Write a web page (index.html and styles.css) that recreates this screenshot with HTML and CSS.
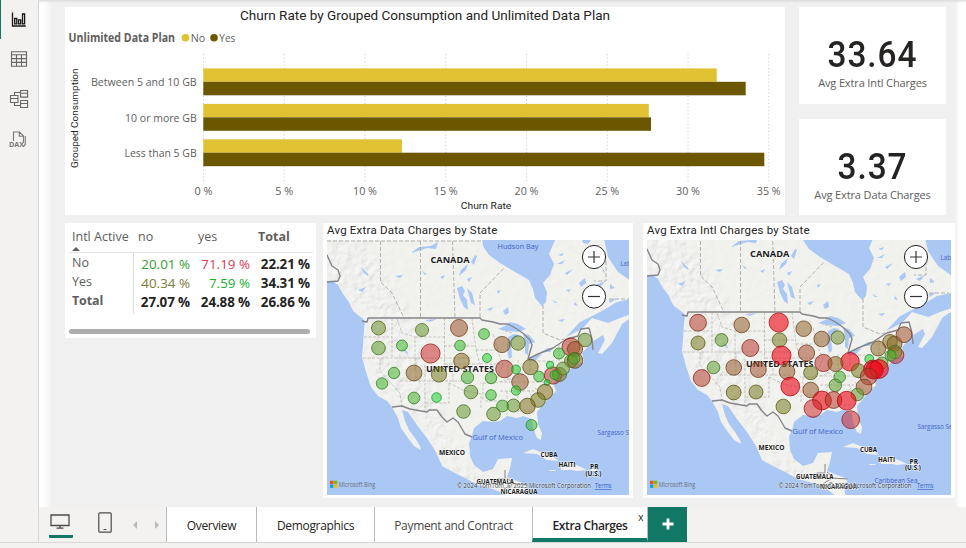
FILE: index.html
```html
<!DOCTYPE html>
<html lang="en">
<head>
<meta charset="utf-8">
<title>Extra Charges</title>
<link rel="stylesheet" href="styles.css">
</head>
<body>
<div class="app">
  <div class="workspace">
    <nav class="rail">
      <div class="rail-item active"><svg width="16" height="16" viewBox="0 0 16 16"><path d="M1.500 .5v13.500H14.800M3.700 6.500h2.100v5.300H3.700zM7.600 7.800h2.100v4H7.600zM11.500 2h2.100v9.800h-2.100z" fill="none" stroke="#161616" stroke-width="1.300"/></svg></div>
      <div class="rail-item"><svg width="18" height="16" viewBox="0 0 18 16"><path d="M1.5.7h15v14.6h-15zM1.5 3.8h15M1.5 7.6h15M1.5 11.4h15M6.5 3.8v11.5M11.5 3.8v11.5" fill="none" stroke="#686664" stroke-width="1.1"/></svg></div>
      <div class="rail-item"><svg width="20" height="20" viewBox="0 0 20 20"><path d="M1.5 6.5h7.5v7H1.5zM1.5 9.5h7.5M11.6 1.5h7v6.6h-7zM11.6 4.2h7M11.6 11.5h7v7h-7zM11.6 14.5h7M5.5 6.500V3.500h6M5.500 13.500v3h6" fill="none" stroke="#686664" stroke-width="1.100"/></svg></div>
      <div class="rail-item"><svg width="20" height="20" viewBox="0 0 20 20"><path d="M5.500 12V3h6l4 4v6.500M11.300 3v4.300h4M17.300 7v8.500l-2 2" fill="none" stroke="#7a7876" stroke-width="1.100"/><text x="1" y="18" class="dax" textLength="15" lengthAdjust="spacingAndGlyphs">DAX</text></svg></div>
    </nav>
    <div class="main">
      <main class="report">
        <div class="row top">
          <section class="card chart">
            <svg id="chart" width="720" height="208" viewBox="65 7 720 208"></svg>
          </section>
          <div class="kpis">
            <section class="card kpi"><div class="value">33.64</div><div class="caption">Avg Extra Intl Charges</div></section>
            <section class="card kpi second"><div class="value">3.37</div><div class="caption">Avg Extra Data Charges</div></section>
          </div>
        </div>
        <div class="row bottom">
          <section class="card matrix">
            <div class="m-head"><span>Intl Active<i class="sort"></i></span><span>no</span><span>yes</span><b>Total</b></div>
            <div class="m-row"><span>No</span><span class="g1">20.01 %</span><span class="r1">71.19 %</span><b>22.21 %</b></div>
            <div class="m-row"><span>Yes</span><span class="o1">40.34 %</span><span class="g2">7.59 %</span><b>34.31 %</b></div>
            <div class="m-row total"><b>Total</b><b>27.07 %</b><b>24.88 %</b><b>26.86 %</b></div>
            <div class="scroll"></div>
          </section>
          <section class="card map">
            <h2>Avg Extra Data Charges by State</h2>
            <svg width="302" height="255" viewBox="327 240 302 255">
              <defs>
                <filter id="relief" x="0" y="0" width="1" height="1">
                  <feTurbulence type="fractalNoise" baseFrequency=".14" numOctaves="4" seed="8"/>
                  <feDiffuseLighting surfaceScale="1.700" lighting-color="#ffffff"><feDistantLight azimuth="225" elevation="58"/></feDiffuseLighting>
                </filter>
                <filter id="soft" x="-.2" y="-.2" width="1.400" height="1.400"><feGaussianBlur stdDeviation="6"/></filter>
                <path id="land" d="M320 230V281L333 281L338 285L343 294L349 302L352 308L360 313L365 322L364 330L363 345L362 357L366 372L371 387L378 396L387 401L392 407L398 418L401 428L408 438L414 446L421 450L420 446L415 438L409 430L405 421L402 410L408 412L417 425L427 438L436 452L442 466L455 473L467 479L478 485L493 489L507 495L518 504H526L524 494L528 485L517 481L507 477L510 468L512 458L498 459L493 469L483 472L474 465L470 456L469 443L472 436L474 428L483 421L492 422L500 421L507 416L517 418L523 416L532 419L533 428L537 438L541 440L542 433L538 424L537 412L547 400L556 391L553 383L559 377L567 373L573 366L584 362L582 353L593 341L603 335L605 340L598 353L602 354L612 343L622 324L629 319L640 316V311L620 318L608 323L592 318L582 329L566 337L580 322L602 311L617 302L635 298V284L618 272L608 257L602 230Z"/>
                <clipPath id="landClip"><use href="#land"/></clipPath>
                <mask id="mountains"><g fill="#fff" filter="url(#soft)"><path d="M327 240H365L410 315L433 380L450 440L495 490L470 490L410 412L370 375V315L327 280Z"/><path opacity=".4" d="M510 410L560 355L600 330L592 350L550 385Z"/></g></mask>
                <g id="base">
                  <rect x="320" y="230" width="320" height="280" fill="#abc7f3"/>
                  <use href="#land" fill="#f2f1ee"/>
                  <g clip-path="url(#landClip)">
                    <rect x="320" y="230" width="320" height="280" filter="url(#relief)" opacity=".07"/>
                    <g mask="url(#mountains)"><rect x="320" y="230" width="320" height="280" filter="url(#relief)" opacity=".33"/></g>
                  </g>
                  <g fill="#f1f0ed"><path d="M523 453L533 449L540 452L549 454L559 461L547 460L537 454ZM561 463L572 463L587 470L577 471L572 470L561 470ZM549 470h6l1 1h-6zM591 469h5v2h-5zM350 305l5 2 11 12-4-1-8-6zM609 331l5-1v1z"/></g>
                  <g fill="#abc7f3">
                    <path d="M481 230L483 246L489 255L500 263L515 272L529 280L533 289L535 298L542 306L546 302L547 292L543 283L550 275L554 264L549 254L556 238V230Z"/>
                    <path d="M498 329L505 326L510 322L518 324L526 329L518 332L507 331ZM508 337L514 334L519 335L511 342L512 357L509 359L507 350ZM523 334L529 335L535 342L529 344L528 355L525 353L525 342ZM527 361L537 355L542 354L535 361ZM541 352L548 348L554 348L550 352Z"/>
                    <path d="M457 288l5-2 3 5-2 4 4 5 1 10-4-3-4-8zM467 288l5 5 3 12-4-2zM461 270l7-6-2 6-7 6zM467 279l5-2-3 5zM411 253l8-6 12-1 7-4-2 7-9-1-9 3zM395 276l8-1-3 3zM422 271l5 3-2 1zM440 277l5-2-2 4zM361 267l8 8-1 1-5-4zM358 290l8-3-4 5z"/>
                    <path d="M582 240l9 0-3 4-5-1zM557 264l8-4-3 4zM565 273l8-4-6 6zM579 283l6-5 1 5-5 4zM596 285l9-4-5 6zM552 300l6 3-3 0zM566 290l5-1-2 3zM600 265l5 7-1 1zM487 309l7-2-4 4zM503 311l5-4 1 6-4 2zM497 291l4-1-3 4zM558 320l7-1-3 3zM471 262l4-7 2 1-3 9zM585 300l6-3-2 5zM610 284l5 4-5 1zM609 300l8-2-7 5zM425 320l12-1-7 3zM402 349l5 2 1 4zM558 255l6-2-2 3zM575 302l3 4-4-1z"/>
                  </g>
                  <g fill="none" stroke="#a3a19d" stroke-width=".8" stroke-dasharray="4 2">
                    <path d="M327 241H482M380.500 241V282L392 293L404 318M420.500 241V318M452.500 241L455 318M480 317V293L505 267M543 305V333L560 340L570 338M606 261V281H594M609 299H629"/>
                  </g>
                  <g fill="none" stroke="#b4b2ae" stroke-width=".7" stroke-dasharray="3 1.500">
                    <path d="M364 337H392M392 318V358M363 358H470M397 319L402 333L415 337V370M415 337H445M444.500 318V365M444 346H474M472 318L476 350L480 364M380 358V371L400 393L402 406M416 357V380M400 381H472M425 365V412M453 365V383M445 364H480M449 383V403H425M449 383L463 390L481 394V409M480 364H500M476 350H498M497 350L503 365L495 383H480M483 383V401M485 401H500M508 360V380M518 360V375M495 383L518 377L530 371M500 382H552M500 391H535M507 391V415M518 391V414M529 390L535 407M519 411H535M535 388L546 398M530 371V361H557M540 375L552 366M559 361V343M570 340V362M578 336L580 350M565 354H583M493 334L498 350M512 333L502 330"/>
                  </g>
                  <g fill="none" stroke="#85858a" stroke-width="1.400" stroke-linejoin="round">
                    <path d="M327 255L332 266L338 270L340 276L338 281L327 282M362 321L367 322L368 318H480L482 320L493 322L500 324L508 324L517 329L524 334L530 340L532 345L528 359L538 354L553 348L562 342L567 339L578 336L581 329L589 328L592 339L593 350M392 407L402 406L410 409L427 412L429 410H437L442 417L447 422L453 418L458 422L465 434L472 437"/>
                    <path stroke-width="1" d="M495 485L497 479H505V470M507 478L512 482M503 490L512 484L528 485"/>
                  </g>
                </g>
              </defs>
              <use href="#base"/>
              <g class="labels" id="labelsA"></g><g id="bubblesA"></g><g class="labels" id="topA"></g>
            </svg>
          </section>
          <section class="card map wide">
            <h2>Avg Extra Intl Charges by State</h2>
            <svg width="304" height="255" viewBox="647 240 304 255">
              <use href="#base" transform="translate(320 -6)"/>
              <g class="labels" id="labelsB"></g><g id="bubblesB"></g><g class="labels" id="topB"></g>
            </svg>
          </section>
        </div>
      </main>
      <footer class="tabs">
        <div class="views">
          <span class="desk"><svg width="20" height="16" viewBox="0 0 20 16"><path d="M1 1h18v10.500H1zM10 11.500v2.500M6.500 14.200h7" fill="none" stroke="#4e4b49" stroke-width="1.300"/></svg></span>
          <svg class="phone" width="14" height="21" viewBox="0 0 14 21"><rect x=".8" y=".8" width="12.400" height="19.400" rx="1" fill="none" stroke="#4e4b49" stroke-width="1.200"/><path d="M5.500 17.500h3" stroke="#4e4b49"/></svg>
          <i class="prev"></i><i class="next"></i>
        </div>
        <div class="tab t1">Overview</div><div class="tab t2">Demographics</div><div class="tab t3">Payment and Contract</div>
        <div class="tab t4">Extra Charges<span class="close">x</span></div>
        <div class="add"><svg width="12" height="12" viewBox="0 0 12 12"><path d="M6 .5v11M.5 6h11" stroke="#fff" stroke-width="2.800"/></svg></div>
      </footer>
    </div>
  </div>
  <div class="status"></div>
</div>
<script src="report.js"></script>
</body>
</html>
```
FILE: styles.css
```css
* { box-sizing: border-box; }
body { margin: 0; background: #f3f2f1; font-family: "Open Sans", "Noto Sans", sans-serif; color: #605e5c; }
.app { width: 966px; height: 548px; overflow: hidden; display: flex; flex-direction: column; }
.workspace { height: 543px; display: flex; border-bottom: 1px solid #d8d7d6; }
.rail { width: 39px; background: #f3f2f1; border-right: 1px solid #d8d8d8; display: flex; flex-direction: column; }
.rail-item { height: 40px; display: flex; align-items: center; justify-content: center; }
.rail-item.active { height: 39px; border-left: 1px solid #117865; padding-right: 2px; }
.rail-item:last-child { padding-right: 2px; }
.dax { font: 700 7px "Open Sans", sans-serif; fill: #7a7876; }
.main { flex: 1; display: flex; flex-direction: column; }
.report { height: 507px; padding: 7px 0 0 26px; background: linear-gradient(#dcdcdc, transparent) 0 0 / 100% 3px no-repeat, linear-gradient(90deg, #fff 0, #fcfcfc 6px, #f0f0f0 13px, #f0f0f0 916px, #fdfdfd 920px, #fff 927px); }
.row { display: flex; align-items: flex-start; }
.top { gap: 14px; height: 216px; }
.card { background: #fff; flex: none; }
.chart { width: 720px; height: 208px; }
.chart svg, .map svg { display: block; }
.kpis { display: flex; flex-direction: column; gap: 15px; }
.kpi { width: 147px; height: 97px; padding-top: 24px; text-align: center; }
.kpi.second { height: 96px; }
.value { font: 500 37.5px/46px Roboto, sans-serif; color: #252423; letter-spacing: 1.1px; transform: scaleX(.89); }
.caption { font-size: 11px; line-height: 12px; letter-spacing: -.13px; white-space: nowrap; }
.second .caption { line-height: 11px; }
.matrix { width: 251px; height: 115px; font-size: 12.5px; padding: 4px 3px 0 4px; margin-right: 7px; }
.m-head, .m-row { display: grid; grid-template-columns: 65px 60px 60px 59px; }
.m-head { height: 26px; line-height: 19px; border-bottom: 1px solid #e4e4e4; }
.m-head > :first-child { padding-left: 3px; white-space: nowrap; }
.m-head > * + * { padding-left: 4px; }
.sort { display: block; width: 0; border: 4.5px solid transparent; border-top: 0; border-bottom: 4px solid #605e5c; margin-top: 1px; }
.m-row { height: 19px; line-height: 23px; font-size: 13.4px; text-align: right; white-space: nowrap; padding-right: 3px; grid-template-columns: 65px 56px 60px 60px; }
.m-row b { letter-spacing: -.12px; }
.m-row > :first-child { font-size: 12.5px; text-align: left; padding-left: 3px; border-right: 1px solid #ddd; line-height: 20px; }
.m-row b + b, .m-row span ~ b { color: #252423; }
.g1 { color: #33a033; } .r1 { color: #d83b52; } .o1 { color: #7d7a38; } .g2 { color: #17b42d; }
.scroll { width: 241px; height: 5px; border-radius: 3px; background: #adadad; margin-top: 19px; }
.map { width: 310px; height: 275px; padding-left: 4px; margin-right: 10px; }
.map.wide { width: 312px; margin-right: 0; }
.map h2 { margin: 0; height: 17px; font: 400 11.5px/15px Roboto, sans-serif; letter-spacing: .21px; color: #252423; white-space: nowrap; }
.labels { font-family: "Open Sans", sans-serif; }
.tabs { height: 35px; display: flex; background: #f3f2f1; }
.views { width: 127px; display: flex; align-items: flex-start; }
.desk { width: 24px; height: 31px; margin: 0 26px 0 10px; padding: 6px 2px 0 1px; border-bottom: 3px solid #117865; border-radius: 1px; }
.phone { margin: 5px 21px 0 -1px; }
.prev, .next { border: 4px solid transparent; margin-top: 14px; }
.prev { border-right: 4px solid #bcbab8; border-left: 0; margin-right: 18px; }
.next { border-left: 4px solid #bcbab8; border-right: 0; }
.tab { background: #fff; border-left: 1px solid #bbb; color: #252423; font-size: 12px; letter-spacing: -.32px; line-height: 38px; text-align: center; position: relative; white-space: nowrap; }
.t1 { width: 90px; } .t2 { width: 118px; } .t3 { width: 158px; color: #484644; }
.t4 { width: 116px; border-bottom: 4px solid #117865; border-right: 1px solid #bbb; font-weight: 600; letter-spacing: -.4px; }
.close { position: absolute; right: 4px; top: 2px; font-size: 10px; line-height: 16px; font-weight: 400; }
.add { width: 39px; background: #117865; display: flex; align-items: center; justify-content: center; }
.add svg { margin-top: -2px; }
.status { height: 5px; background: #f3f2f1; }
```
FILE: report.js
```js
const NS = "http://www.w3.org/2000/svg";
function el(parent, tag, attrs, text) {
  const n = document.createElementNS(NS, tag);
  for (const k in attrs) n.setAttribute(k, attrs[k]);
  if (text) n.textContent = text;
  parent.appendChild(n);
  return n;
}
function label(parent, text, x, y, width, size, color, weight, family) {
  return el(parent, "text", { x, y, "font-size": size, fill: color, "font-weight": weight || 400,
    "font-family": family || "Open Sans, sans-serif", textLength: width, lengthAdjust: "spacingAndGlyphs" }, text);
}

// Clustered bar chart
const c = document.getElementById("chart");
const grey = "#605e5c", ink = "#252423";
label(c, "Churn Rate by Grouped Consumption and Unlimited Data Plan", 240, 20, 370, 13, ink, 400, "Roboto, sans-serif");
label(c, "Unlimited Data Plan", 68.5, 42.3, 106.5, 11.5, grey, 700);
el(c, "circle", { cx: 185.4, cy: 37.8, r: 3.8, fill: "#e0c232" });
label(c, "No", 190.8, 42.3, 14.5, 11.5, grey);
el(c, "circle", { cx: 214, cy: 37.8, r: 3.8, fill: "#6b5700" });
label(c, "Yes", 219.3, 42.3, 16, 11.5, grey);
for (let i = 0; i < 8; i++) {
  const x = 203.5 + i * 80.75;
  el(c, "path", { d: `M${x} 54V183`, stroke: "#c8c8c8", "stroke-dasharray": "1 2.5" });
  const w = i < 2 ? 18 : 24;
  label(c, i * 5 + " %", x - w / 2, 195, w, 11, grey);
}
[["Between 5 and 10 GB", 91, 86, 716.7, 745.7, 68.4],
 ["10 or more GB", 125, 121.7, 648.8, 651, 103.9],
 ["Less than 5 GB", 124.5, 157, 402, 764.3, 139.3]].forEach(([t, tx, ty, a, b, y]) => {
  label(c, t, tx, ty, 196.7 - tx, 11, grey);
  el(c, "rect", { x: 203.3, y, width: a - 203.3, height: 13.4, fill: "#e0c232" });
  el(c, "rect", { x: 203.3, y: y + 13.4, width: b - 203.3, height: 13.5, fill: "#6b5700" });
});
label(c, "Churn Rate", 460.8, 208.8, 50.5, 9.8, ink, 400, "Roboto, sans-serif");
label(c, "Grouped Consumption", 0, 0, 99.5, 9.8, ink, 400, "Roboto, sans-serif").setAttribute("transform", "translate(78 168) rotate(-90)");

const stops = [[4.5, 25, 210, 45], [5.7, 55, 185, 40], [6.8, 100, 145, 40], [7.3, 120, 115, 20], [7.9, 145, 90, 35], [8.5, 175, 60, 40], [9.1, 205, 35, 40], [9.5, 238, 10, 25]];
function shade(r, k) {
  let i = 0;
  while (i < stops.length - 2 && r > stops[i + 1][0]) i++;
  const a = stops[i], b = stops[i + 1];
  const t = Math.max(0, Math.min(1, (r - a[0]) / (b[0] - a[0])));
  return `rgb(${[1, 2, 3].map(j => Math.round((a[j] + (b[j] - a[j]) * t) * k)).join()})`;
}
function bubbles(id, data) {
  const g = document.getElementById(id);
  data.forEach(([cx, cy, r, tone]) => el(g, "circle", { cx, cy, r: r - .2, fill: shade(tone || r, 1), "fill-opacity": (tone || r) > 9.3 ? .62 : .53, stroke: shade(tone || r, .72), "stroke-opacity": .85, "stroke-width": .9 }));
}
bubbles("bubblesA", [[378.5,328,7.2,6.9],[378.5,348,7,6.6],[402,345.5,5.7],[422,330,6.7],[459,328,8.7,8.1],[460,345.5,5.5],[430.5,353.5,9.8,9],[461.500,361,8,7.600],[484,334,5.6],[502,344.5,8.300,7.900],[518,343,7.400,6.900],[487,358,4.7],[585,340,7,6.800],[571,347,9.2,8.8],[575,349,7.8,8],[559,353.5,5.7],[414,373,8.1,7.7],[439,374.5,7.8,7.2],[394,373,5.9],[382,383.5,5.9],[467.5,377.5,6.4,6],[471,392,7,6.7],[414,398,6.100,6],[436.5,397.5,5,4.5],[463.5,411.5,7,6.7],[504.5,369,9,8.6],[516,369.5,4.7],[530.5,367,7.9,7.5],[491,378,5.9],[520,382,8.5,8],[516,390.5,4.9],[491,395,5.5],[539,376.500,5.5],[553,375.5,8.8],[559.5,374.500,7.2],[554.5,375,4.7],[550,365,3.9],[563,368.5,6.7],[547,382.5,3.2],[545,392,7.9,7.5],[538,400,7.5,7.2],[527.5,406,8,7.5],[513.5,405.5,6.7],[502.5,406,6.100],[493.5,414,7,6.7],[531.5,425,5.7],[571,361,6.7],[575,360.5,8,7.8],[574,358.5,6]]);
bubbles("bubblesB", [[698,322.7,8.6],[741.7,325,8,7.9],[778.7,322.5,9.8],[698,343,7.2],[721.5,340,6.6],[803.7,328.7,8,7.8],[779.5,340,7.400,7.2],[750.3,348,8.7],[781.500,355.500,9.7],[821.7,339,8,7.9],[837.7,337.5,6.9],[806.5,353,8.3],[823.5,363,8.8],[850,361.7,9.5],[835.5,364,7.7],[869.3,359,4.7],[878.3,348.5,7.7],[890,341.8,7.5],[894.5,343.7,7.7],[904,334.7,8.1],[895.500,355.2,8.5,9],[895,352,7,6.8],[890.5,355.5,5.7],[882,363,6.2],[701.7,378,8.6],[713.5,367.5,6.5],[733.7,367.5,8],[758.3,369.5,8.2],[787,371.7,8],[810.7,372.7,7.2],[790.3,386.5,9.6],[810.7,390,8],[839.7,377,6],[835.3,385.3,6.5],[858.5,370.7,7.2],[873,369.5,9.6],[874.500,370,9,9.600],[879,369,9.6],[868.7,376.5,8.6],[864,387,8.1],[857.3,394.5,6.5],[733.7,392.5,7.6,7.300],[756,392,7.2],[783.3,406.5,7.5,7.200],[822,400.5,9.6],[833.5,400,8.6],[846.7,400.7,9.6],[813,408.5,9.1],[850.7,419.7,9.1]]);

function mapText(id, rows) {
  const g = document.getElementById(id);
  rows.forEach(([t, x, y, w, s, blue]) => {
    const n = label(g, t, x, y, w, s, blue ? "#4266c8" : "#1c1c1c", blue ? 400 : 700);
    if (!blue) { n.setAttribute("stroke", "#fff"); n.setAttribute("stroke-width", "1.5"); n.setAttribute("stroke-opacity", ".55"); n.setAttribute("paint-order", "stroke"); }
  });
}
mapText("labelsA", [["CANADA",430.5,262.5,39,8.8],["Hudson Bay",497.5,249,41,8,1],["Lab",620.5,265.5,10,7,1],["UNITED STATES",426,372.3,68,9],["Gulf of Mexico",472.5,439.5,50.5,8,1],["Sargasso Se",597.5,435,35,6.8,1],["MEXICO",439,455.3,26,7.2],["CUBA",540.5,457.3,17,7],["HAITI",558.5,467,17,6.8],["PR",590,468.5,8.500,7],["(U.S.)",585.500,475.5,16,7],["GUATEMALA",476.500,484.200,37.500,7],["NICARAGUA",500.5,494.3,37,7]]);
mapText("labelsB", [["CANADA",750,257,39.5,8.8],["Labr",940.5,260,13,7,1],["UNITED STATES",746,366.5,67.5,9],["Gulf of Mexico",792.5,434,50.5,8,1],["Sargasso Se",917.5,429.3,35,6.8,1],["MEXICO",758.500,449.7,26,7.2],["CUBA",860,452.3,17,7],["HAITI",878,462,17,6.8],["PR",909.500,463.5,8.500,7],["(U.S.)",905,470.2,16,7],["GUATEMALA",796,479.300,37.500,7],["Caribbean Sea",874.500,483,43,7,1],["NICARAGUA",820,488.800,37,7]]);

function furniture(id, left, zx, credit, cx, cw, tx) {
  const g = document.getElementById(id);
  [257, 296.5].forEach((y, i) => {
    el(g, "circle", { cx: zx, cy: y, r: 11.6, fill: "#fff", stroke: "#222", "stroke-width": 1 });
    el(g, "path", { d: `M${zx - 6} ${y}h12` + (i ? "" : `M${zx} ${y - 6}v12`), stroke: "#333", "stroke-width": 1.2 });
  });
  [["#f25022",0,0],["#7fba00",3.8,0],["#00a4ef",0,3.8],["#ffb900",3.8,3.8]].forEach(([f, x, y]) => el(g, "rect", { x: left + 3 + x, y: 480.7 + y, width: 3.4, height: 3.4, fill: f }));
  label(g, "Microsoft Bing", left + 11.7, 487, 36.5, 6.6, "#68707c");
  const t = label(g, credit, cx, 488.3, cw, 6.2, "#3d424b");
  t.setAttribute("stroke", "#fff"); t.setAttribute("stroke-width", "1.2"); t.setAttribute("stroke-opacity", ".4"); t.setAttribute("paint-order", "stroke");
  label(g, "Terms", tx, 488.3, 16.5, 6.2, "#315fc4").setAttribute("text-decoration", "underline");
}
furniture("topA", 327, 594, "© 2024 TomTom, © 2025 Microsoft Corporation", 457, 134, 595);
furniture("topB", 647, 916, "© 2024 TomTom, © 2025 Microsoft Corporation", 778.5, 133, 917);
```
